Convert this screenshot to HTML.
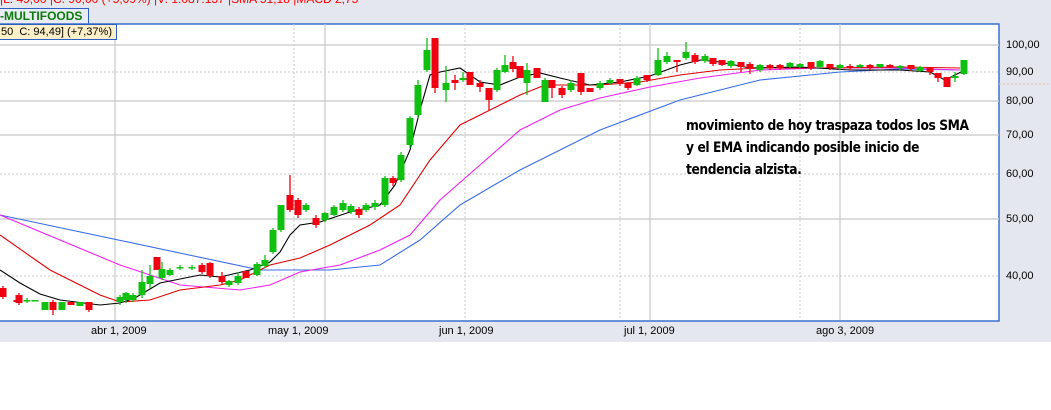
<!DOCTYPE html>
<html><head><meta charset="utf-8"><style>
html,body{margin:0;padding:0;width:1051px;height:410px;overflow:hidden;background:#fff;font-family:"Liberation Sans",sans-serif}
.bg{position:absolute;left:0;top:0;width:1051px;height:342px;background-color:#eceef3;background-image:radial-gradient(#cfd3dc 0.6px,transparent 0.8px);background-size:2px 2px}
.top{position:absolute;left:0;top:-8px;font-size:12px;color:#f00;white-space:nowrap}
.name{position:absolute;left:-3px;top:8px;height:15px;border:1px solid #2a5fc8;background:#e9ecf3;color:#0a7a0a;font-weight:bold;font-size:12px;line-height:15px;padding:0 6px 0 2px}
.leg{position:absolute;left:-2px;top:24px;height:14px;border:1px solid #2a5fc8;background:#fdf0c8;font-size:11px;line-height:14px;padding:0 4px 0 2px;z-index:3}
.ax{position:absolute;left:1006px;font-size:11px;color:#000}
.dt{position:absolute;top:325px;font-size:11px;color:#000}
.note{position:absolute;left:686px;top:115px;font-size:14px;font-weight:bold;line-height:22px;letter-spacing:-0.5px;font-family:"Comic Sans MS","DejaVu Sans",sans-serif;color:#000;transform:scaleX(0.88);transform-origin:left}
svg{position:absolute;left:0;top:0}
</style></head><body>
<div class="bg"></div>
<div class="top">|L: 49,00 |C: 90,00 (+5,09%) |V: 1.087.137 |SMA 51,18 |MACD 2,75</div>
<div class="name">-MULTIFOODS</div>
<svg width="1051" height="342">
<rect x="-1" y="24" width="1000" height="297" fill="#fff" stroke="#3a6fd0" stroke-width="1.5"/>
<g stroke="#c8c8c8" stroke-width="1.2">
<line x1="0" y1="45" x2="999" y2="45"/><line x1="0" y1="101" x2="999" y2="101"/><line x1="0" y1="135" x2="999" y2="135"/><line x1="0" y1="219" x2="999" y2="219"/>
<line x1="115" y1="24" x2="115" y2="320"/><line x1="325" y1="24" x2="325" y2="320"/><line x1="650" y1="24" x2="650" y2="320"/><line x1="840" y1="24" x2="840" y2="320"/>
</g>
<g stroke="#c8c8c8" stroke-dasharray="2,2">
<line x1="0" y1="72" x2="999" y2="72"/><line x1="0" y1="174" x2="999" y2="174"/><line x1="0" y1="276" x2="999" y2="276"/>
<line x1="294" y1="24" x2="294" y2="320"/><line x1="465" y1="24" x2="465" y2="320"/><line x1="620" y1="24" x2="620" y2="320"/><line x1="800" y1="24" x2="800" y2="320"/>
</g>
<line x1="999" y1="84" x2="1051" y2="84" stroke="#f4c0b0" stroke-dasharray="2,2"/>
<g fill="none" stroke-width="1.1">
<polyline stroke="#3a6ee8" points="0,215 260,270 330,270 380,265 420,240 460,205 520,170 600,130 680,100 760,80 840,72 900,69 960,70"/>
<polyline stroke="#f020f0" points="0,215 60,240 120,265 180,285 240,290 270,285 300,272 340,265 380,250 410,235 440,200 480,165 520,130 560,110 600,98 650,87 700,78 760,70 820,68 900,68 960,70"/>
<polyline stroke="#e00000" points="0,235 50,270 100,295 120,302 150,300 180,290 220,285 240,280 270,265 300,258 330,245 370,225 400,205 430,160 460,125 490,110 520,95 545,85 570,85 600,85 640,82 680,75 720,70 760,68 820,68 900,67 960,68"/>
<polyline stroke="#000" points="0,270 20,283 40,294 60,300 100,305 120,303 135,298 160,283 200,275 220,277 250,270 270,262 280,252 290,235 300,225 320,222 350,212 380,205 395,185 410,150 420,110 430,75 440,72 460,68 480,82 500,85 520,77 540,73 560,78 590,85 620,82 650,76 680,65 700,60 720,62 750,68 800,67 850,70 900,70 930,72 945,80 955,75 965,70"/>
</g>
<g id="c"></g>
</svg>
<div class="leg">50&nbsp; C: 94,49] (+7,37%)</div>
<div class="ax" style="top:39px">100,00</div>
<div class="ax" style="top:66px">90,00</div>
<div class="ax" style="top:95px">80,00</div>
<div class="ax" style="top:129px">70,00</div>
<div class="ax" style="top:168px">60,00</div>
<div class="ax" style="top:213px">50,00</div>
<div class="ax" style="top:270px">40,00</div>
<div class="dt" style="left:91px">abr 1, 2009</div>
<div class="dt" style="left:268px">may 1, 2009</div>
<div class="dt" style="left:439px">jun 1, 2009</div>
<div class="dt" style="left:624px">jul 1, 2009</div>
<div class="dt" style="left:816px">ago 3, 2009</div>
<div class="note">movimiento de hoy traspaza todos los SMA<br>y el EMA indicando posible inicio de<br>tendencia alzista.</div>
<script>
var d=[[3,'r',288,297,286,299],[17,'r',300,302,300,302],[19,'r',295,303,293,305],[27,'g',300,301,298,303],[35,'g',300,301,300,301],[45,'g',302,310,302,310],[53,'r',302,310,300,315],[62,'g',302,310,302,310],[71,'r',302,305,302,305],[80,'g',302,306,302,306],[89,'r',302,310,302,312],[120,'g',297,302,295,305],[126,'g',293,300,292,303],[133,'g',295,300,293,302],[142,'g',282,295,270,298],[150,'g',276,284,265,288],[157,'r',257,270,257,270],[162,'g',269,278,262,280],[170,'g',270,275,268,276],[180,'g',267,268,265,270],[192,'g',267,268,265,270],[202,'r',265,272,263,274],[210,'r',263,276,262,278],[222,'r',276,282,272,285],[229,'g',281,285,280,287],[238,'g',276,283,272,285],[246,'r',271,278,271,278],[257,'g',264,275,262,276],[265,'g',260,266,255,268],[273,'g',230,252,228,254],[281,'g',205,230,205,232],[290,'r',195,210,175,212],[298,'r',200,215,198,218],[306,'g',205,210,203,212],[316,'r',218,225,215,228],[325,'g',213,220,212,222],[334,'g',207,215,205,216],[343,'g',203,210,200,212],[351,'g',206,212,204,214],[359,'r',209,215,207,218],[366,'g',205,210,203,212],[375,'g',203,207,200,210],[385,'g',178,205,176,207],[393,'r',178,183,176,186],[401,'g',155,180,152,182],[410,'g',118,145,116,148],[418,'g',85,115,80,118],[427,'g',50,70,38,72],[435,'r',38,88,38,93],[446,'g',83,90,66,102],[455,'r',80,83,75,90],[463,'g',78,80,72,82],[470,'r',72,85,72,85],[480,'r',83,87,80,92],[489,'r',88,100,88,110],[497,'g',70,90,68,92],[505,'g',65,72,55,73],[513,'r',62,69,56,72],[520,'r',66,78,66,78],[527,'g',70,83,63,95],[537,'r',68,78,68,78],[545,'g',80,102,78,102],[552,'r',80,88,80,98],[562,'r',88,95,86,98],[571,'g',83,90,80,92],[581,'r',73,92,73,95],[590,'r',88,92,88,92],[600,'g',83,88,81,90],[610,'g',80,83,78,85],[620,'r',79,83,79,86],[628,'r',83,88,82,90],[637,'g',78,85,76,86],[647,'r',75,80,75,82],[658,'g',60,75,48,76],[667,'g',56,62,52,64],[677,'r',60,62,60,72],[686,'g',52,58,42,60],[695,'r',55,62,53,64],[705,'g',56,61,54,63],[713,'r',58,64,58,66],[722,'r',60,65,60,66],[731,'g',61,66,60,68],[741,'r',62,67,62,72],[750,'r',64,69,62,74],[760,'g',65,70,64,72],[770,'r',65,68,64,70],[780,'r',65,68,64,70],[790,'g',63,67,62,68],[800,'g',64,67,63,68],[811,'r',62,68,62,70],[820,'g',61,67,60,68],[830,'r',64,68,64,70],[840,'g',65,68,64,70],[850,'r',66,68,64,70],[860,'g',65,67,64,68],[870,'r',65,68,64,70],[880,'g',64,67,64,68],[890,'r',65,67,64,68],[900,'g',66,68,65,70],[911,'r',65,69,65,71],[920,'g',67,71,66,72],[930,'r',68,72,68,75],[938,'r',73,78,73,82],[947,'r',77,87,77,87],[955,'g',76,78,72,82],[964,'g',60,74,60,75]];
var s='';d.forEach(function(c){var col=c[1]=='g'?'#10c010':'#f00010';var h=Math.max(c[3]-c[2],1.5);s+='<line x1="'+c[0]+'" x2="'+c[0]+'" y1="'+c[4]+'" y2="'+c[5]+'" stroke="'+col+'" stroke-width="1.3"/><rect x="'+(c[0]-3.5)+'" y="'+c[2]+'" width="7" height="'+h+'" fill="'+col+'"/>';});
document.getElementById('c').innerHTML=s;
</script>
</body></html>
